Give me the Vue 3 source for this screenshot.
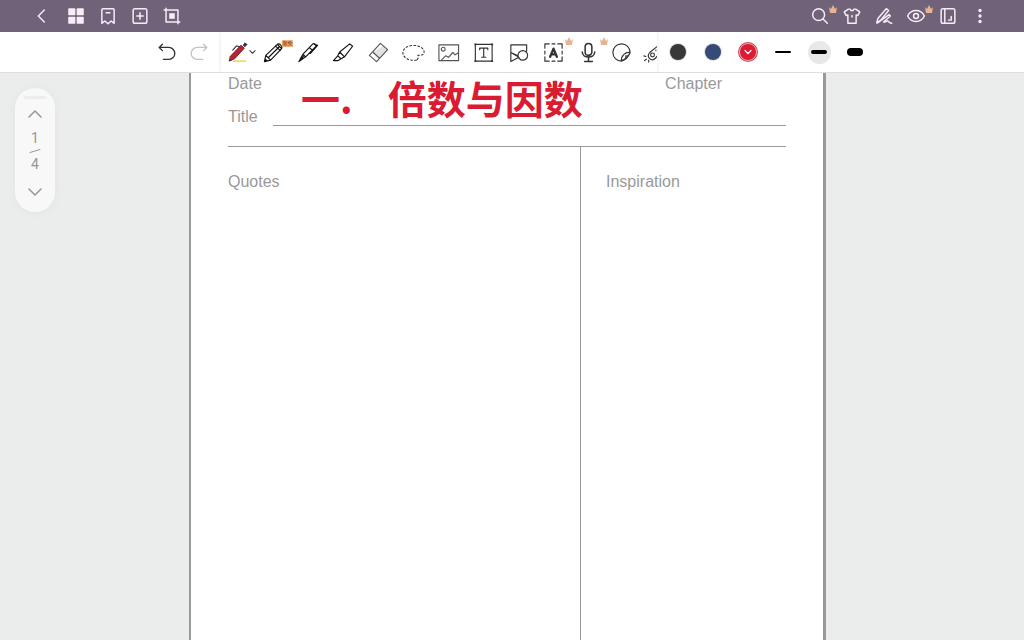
<script setup>
import { ref } from 'vue'

const page = ref(1)
const pages = 4
const color = ref('red')
const width = ref('medium')

const left = [
  { name: 'Back', d: 'M14.5 5.500l-6.500 6.500 6.500 6.500' },
  { name: 'Pages', d: '', grid: true },
  { name: 'Bookmark', d: 'M6.500 4h11a1.200 1.200 0 0 1 1.200 1.200V20l-3.200-2.500L12 20.500l-3.500-3L5.300 20V5.200A1.200 1.200 0 0 1 6.500 4zM10 8.500h4' },
  { name: 'Add page', d: 'M6.500 4h11a2 2 0 0 1 2 2v12a2 2 0 0 1-2 2h-11a2 2 0 0 1-2-2V6a2 2 0 0 1 2-2zM12 8.500v7M8.500 12h7' },
  { name: 'Crop', d: 'M3.500 5.500h15v15M5.500 3.500v15h15', square: true }
]
const right = [
  { name: 'Search', d: 'M17 10.500a6.500 6.500 0 1 1-13 0 6.500 6.500 0 0 1 13 0zM15.300 15.300l4.700 4.700', crown: true },
  { name: 'Theme', d: 'M8 4.500L3.500 7.500l2 4 2-.5v9h9v-9l2 .5 2-4L16 4.500h-2c-.5 2.500-3.500 2.500-4 0zM12 11.500v1.500' },
  { name: 'Handwriting', d: 'M4 19.500l1.500-5L14.500 4l2.500 2-8.500 10.500zM5 19.500L17.500 10.500l1.500 1.500-7.500 6.500c1 1.500 3-1.500 4.500-1s2 2.500 4.500 2.500' },
  { name: 'View mode', d: 'M2.800 12c4.200-8 14.200-8 18.400 0-4.200 8-14.200 8-18.400 0zM14.700 12a2.700 2.700 0 1 1-5.400 0 2.700 2.700 0 0 1 5.400 0z', crown: true },
  { name: 'Page layout', d: 'M6.500 4h11a2 2 0 0 1 2 2v12a2 2 0 0 1-2 2h-11a2 2 0 0 1-2-2V6a2 2 0 0 1 2-2zM8.500 4.500v15M15.500 12.500v4h-3' },
  { name: 'More', d: '', dots: true }
]
const colors = [
  { name: 'black', hex: '#383838' },
  { name: 'blue', hex: '#364a78' },
  { name: 'red', hex: '#dc1c34' }
]
const widths = ['thin', 'medium', 'thick']
</script>

<template>
  <div class="app">
    <header class="topbar">
      <div class="group start">
        <button v-for="i in left" :key="i.name" :aria-label="i.name">
          <svg viewBox="0 0 24 24">
            <path :d="i.d" />
            <g v-if="i.grid" class="solid">
              <rect x="3.500" y="3.500" width="7.800" height="7.800" rx="1" /><rect x="12.700" y="3.500" width="7.800" height="7.800" rx="1" />
              <rect x="3.500" y="12.700" width="7.800" height="7.800" rx="1" /><rect x="12.700" y="12.700" width="7.800" height="7.800" rx="1" />
            </g>
            <rect v-if="i.square" class="solid" x="9" y="9" width="6" height="6" />
          </svg>
        </button>
      </div>
      <div class="group">
        <button v-for="i in right" :key="i.name" :aria-label="i.name">
          <svg viewBox="0 0 24 24">
            <path :d="i.d" />
            <g v-if="i.dots" class="solid"><circle cx="12" cy="6" r="1.800" /><circle cx="12" cy="12" r="1.800" /><circle cx="12" cy="18" r="1.800" /></g>
          </svg>
          <svg v-if="i.crown" class="crown" viewBox="0 0 10 10"><path d="M1 3l2 2 2-4 2 4 2-2-1 6H2z" /></svg>
        </button>
      </div>
    </header>

    <div class="toolbar">
      <button class="history" aria-label="Undo"><svg viewBox="0 0 24 24"><path d="M7 3.500L3.500 7 7 10.500M3.500 7H14a6.500 6.500 0 0 1 0 13H8" /></svg></button>
      <button class="history faded" aria-label="Redo"><svg viewBox="0 0 24 24"><path d="M17 3.500L20.500 7 17 10.500M20.500 7H10a6.500 6.500 0 0 0 0 13h6" /></svg></button>
      <div class="tools">
        <button aria-label="Pen">
          <svg viewBox="0 0 24 24">
            <path class="yellow" d="M7 21h12" />
            <path class="redpen" d="M3.500 16L14.500 4.500l3.500 3L8 18.500l-5 2z" />
            <path class="nib" d="M1.500 21.500l1.500-3 2 2zM16.500 4.500l2-3 3 2-3 3z" />
            <path d="M6 9.500l4-4.500 3 1" />
          </svg>
          <svg class="chevron" viewBox="0 0 8 8"><path d="M1 2.500l3 3 3-3" /></svg>
        </button>
        <button aria-label="Pencil">
          <svg viewBox="0 0 24 24" class="bold">
            <path d="M2.500 21.500l1.500-6.500L16 3.500c2-1.500 6 2 4.500 4.500L9 20zM4 15l5 5M6.500 17.500L18 6M14 5l5 5M16 3.500l4.500 4.500" />
            <path class="nib" d="M2.500 21.500l1-3.500 2.500 2.500z" />
          </svg>
          <span class="tag">限免</span>
        </button>
        <button aria-label="Fountain pen"><svg viewBox="0 0 24 24" class="bold"><path d="M2 21.500l4-7.500L16.500 3c1.500-1 4 1 3 3L9 16.500zM6 14l3 2.500M2 21.500L7.500 15M13 7l3 2.500M18 3.500l3.500 1L14 13" /></svg></button>
        <button aria-label="Highlighter"><svg viewBox="0 0 24 24" class="bold"><path d="M8 11.500l10.500-8.500 3 2.500L13 16.500zM8 11.500l-2 4 3.500 3 3.500-2M6 15.500l-4.500 5h4.500l3.500-2M8 11.500l5 5" /></svg></button>
        <button aria-label="Eraser"><svg viewBox="0 0 24 24"><path class="shade" d="M6.500 11.500l6.500 6.500 8-9-4-4z" /><path class="gray" d="M2.500 15L14 2.500l7.500 6.500L10 21.500zM6 11.500l7 6.500" /></svg></button>
        <button aria-label="Lasso"><svg viewBox="0 0 26 24"><path class="dash" d="M16.500 20.500C7 22 1 17 1 12.500 1 7 7 4 13 4s12 3 12 7.500c0 3-3 4-7 3.500 0 2 1 4-1.500 5.500z" /></svg></button>
        <button aria-label="Image"><svg viewBox="0 0 24 24"><path class="gray" d="M2 4h20.500v16.500H2zM8.500 8.500a2 2 0 1 1-4 0 2 2 0 0 1 4 0zM5 19.500l4-4 3 1.500 4.500-5 2.500 2.500 3-2" /></svg></button>
        <button aria-label="Text"><svg viewBox="0 0 24 24"><path d="M3.500 3.500h17.500v17.500H3.500zM8 9V7.500h8.500V9M12.200 7.500V17M10 17h4.500" /><path class="nib" d="M2.500 2.500h2v2h-2zM20 2.500h2v2h-2zM2.500 20h2v2h-2zM20 20h2v2h-2z" /></svg></button>
        <button aria-label="Shapes"><svg viewBox="0 0 24 24"><path d="M4 12V4h16.500v6.500M21.500 15a5 5 0 1 1-10 0 5 5 0 0 1 10 0zM4 12v9.500l8.500-4.500zM4 12l7.500 3.500" /></svg></button>
        <button aria-label="Text recognition">
          <svg viewBox="0 0 24 24"><path d="M7.500 3H3v4.500M3 10.500v3M3 16.500V21h4.500M10.500 21h3M16.500 21H21v-4.500M21 13.500v-3M21 7.500V3h-4.500M13.500 3h-3" /><path class="heavy" d="M8.500 16.500L12 8l3.500 8.500M10 14h4" /></svg>
          <svg class="crown" viewBox="0 0 10 10"><path d="M1 3l2 2 2-4 2 4 2-2-1 6H2z" /></svg>
        </button>
        <button aria-label="Record">
          <svg viewBox="0 0 24 24"><path class="mic" d="M8.500 6a3.500 3.500 0 0 1 7 0v5.500a3.500 3.500 0 0 1-7 0zM5.500 11.500c0 7 13 7 13 0M12 17v4M8 21.300h8" /></svg>
          <svg class="crown" viewBox="0 0 10 10"><path d="M1 3l2 2 2-4 2 4 2-2-1 6H2z" /></svg>
        </button>
        <button class="narrow" aria-label="Sticker"><svg viewBox="0 0 24 24"><path d="M12 21a9 9 0 1 1 9-9c-2 5-5 8-9 9zM12 21c-1-5 4-10 9-9M13 20c3-1 4-3 3.500-4.500 2 .5 3.500-.5 4.500-3.500" /></svg></button>
        <button aria-label="Laser pointer"><svg viewBox="0 0 24 24"><path d="M8 12L18 4l4 5-8 9c-4 4-10-1-6-6zM13 14.500a2 2 0 1 1-4 0 2 2 0 0 1 4 0zM14.500 9.500v.5M2 15.500l2 .7M2.500 20.500l2-1.500M7 22v-2" /></svg></button>
      </div>
      <div class="choices">
        <button v-for="c in colors" :key="c.name" :aria-label="c.name" @click="color = c.name">
          <span class="swatch" :class="{ on: color === c.name }" :style="{ backgroundColor: c.hex }">
            <svg v-if="color === c.name" viewBox="0 0 8 8"><path d="M1 2.500l3 3 3-3" /></svg>
          </span>
        </button>
        <button v-for="w in widths" :key="w" class="weight" :aria-label="w" @click="width = w">
          <span class="disc" :class="{ on: width === w }"><span class="stroke" :class="w"></span></span>
        </button>
      </div>
    </div>

    <main class="canvas">
      <nav class="pager" aria-label="Pages">
        <span class="grip"></span>
        <button aria-label="Previous page" @click="page = Math.max(1, page - 1)"><svg viewBox="0 0 16 16"><path d="M2 11l6-6 6 6" /></svg></button>
        <span>{{ page }}</span>
        <svg class="slash" viewBox="0 0 12 4"><path d="M1 3.500l10-3" /></svg>
        <span>{{ pages }}</span>
        <button class="down" aria-label="Next page" @click="page = Math.min(pages, page + 1)"><svg viewBox="0 0 16 16"><path d="M2 5l6 6 6-6" /></svg></button>
      </nav>
      <article class="sheet">
        <div class="meta"><span>Date</span><span class="chapter">Chapter</span></div>
        <div class="titlerow"><span>Title</span><div class="line"></div></div>
        <h1 class="ink"><span>一.</span><span>倍数与因数</span></h1>
        <div class="columns">
          <section class="quotes">Quotes</section>
          <section class="inspiration">Inspiration</section>
        </div>
      </article>
    </main>
  </div>
</template>

<style>
body { margin: 0; }
</style>

<style scoped>
.app { height: 100vh; display: flex; flex-direction: column; overflow: hidden; font-family: "Liberation Sans", "Noto Sans CJK SC", sans-serif; background: #ebeded; }
button { position: relative; display: flex; align-items: center; justify-content: center; flex: none; padding: 0; border: 0; background: none; color: inherit; font: inherit; }
svg { display: block; fill: none; stroke: currentColor; stroke-linecap: round; stroke-linejoin: round; stroke-width: 1.5; }
.topbar { display: flex; justify-content: space-between; height: 32px; flex: none; padding: 0 28px 0 26px; background: #706379; color: #f7edf7; }
.group { display: flex; }
.group button { width: 32px; }
.group button > svg:first-child { width: 22px; height: 22px; stroke-width: 1.6; }
.start button:first-child { margin-right: 2px; }
.solid { fill: currentColor; stroke: none; }
.crown { position: absolute; width: 10px; height: 10px; top: 4px; right: -2px; fill: #e5b592; stroke: none; }
.toolbar { display: flex; justify-content: center; height: 40px; flex: none; overflow: hidden; background: #fff; border-bottom: 1px solid #dedede; color: #333; }
.history { width: 32px; }
.history svg { width: 22px; height: 22px; }
.faded { color: #c4c4c4; }
.tools { display: flex; width: 436px; margin-left: 6px; overflow: hidden; box-shadow: 0 0 4px #e4e4e4; }
.tools button { width: 35px; }
.tools .narrow { width: 30px; }
.tools button > svg:first-child { width: 23px; height: 23px; flex: none; stroke-width: 1.2; }
.tools .bold { color: #111; }
.tools .crown { top: 4px; right: -3px; }
.tools .chevron { position: absolute; right: 0; top: 16px; width: 7px; height: 8px; stroke-width: 1.2; }
.yellow { stroke: #f3db58; stroke-width: 2; }
.redpen { fill: #b92334; stroke: #761d2a; stroke-width: 1; }
.nib { fill: currentColor; stroke: none; }
.gray { stroke: #555; }
.shade { fill: #e2e2e2; stroke: none; }
.dash { stroke-dasharray: 2 2.5; }
.heavy { stroke-width: 2.4; }
.mic { stroke-width: 1.6; }
.tag { position: absolute; left: 26px; top: 8px; width: 11px; height: 7px; overflow: hidden; background: #f4b17b; color: #5d2c10; font-size: 5px; line-height: 7px; text-align: center; }
.choices { display: flex; margin-left: 3px; }
.choices button { width: 35px; }
.choices .weight { width: 36px; }
.swatch { display: flex; align-items: center; justify-content: center; width: 16px; height: 16px; border-radius: 50%; box-shadow: 0 0 0 1px #dedede; color: #fff; }
.swatch.on { box-shadow: 0 0 0 1px #efabb3, 0 0 0 2px #c44b58; }
.swatch svg { width: 8px; height: 8px; stroke-width: 1.2; }
.disc { display: flex; align-items: center; justify-content: center; width: 23px; height: 23px; border-radius: 50%; }
.disc.on { background: #e8e8e8; }
.stroke { width: 16px; border-radius: 4px; background: #000; }
.thin { height: 2px; }
.medium { height: 4px; }
.thick { height: 8px; }
.canvas { position: relative; flex: 1; display: flex; min-height: 0; }
.pager { position: absolute; left: 15px; top: 15px; display: flex; flex-direction: column; align-items: center; width: 40px; padding: 8px 0 2px; box-sizing: border-box; border-radius: 20px; background: #f8f8f8; box-shadow: 0 0 8px #e1e3e3; color: #969696; font: 14px/20px Roboto, sans-serif; }
.grip { width: 22px; height: 3px; border-radius: 2px; background: #ececec; }
.pager button { width: 32px; height: 29px; }
.pager .down { height: 36px; }
.pager button svg { width: 16px; height: 16px; }
.slash { width: 12px; height: 4px; margin: 1px 0; stroke-width: 1; }
.sheet { position: relative; flex: 1; display: flex; flex-direction: column; margin: 0 198px 0 189px; padding: 0 37px 0 36px; border: solid #999; border-width: 0 3px 0 2px; background: #fff; color: #999; font-size: 16px; line-height: 20px; }
.meta { display: flex; justify-content: space-between; padding: 1px 64px 0 1px; }
.titlerow { display: flex; align-items: flex-end; gap: 15px; padding: 14px 0 0 1px; }
.line { flex: 1; border-bottom: 1px solid #999; }
.titlerow span { line-height: 18px; }
.ink { position: absolute; left: 110px; top: 0; display: flex; gap: 35px; margin: 0; color: #d91c32; font: bold 39px/48px "Noto Sans CJK SC", sans-serif; white-space: nowrap; }
.columns { flex: 1; display: grid; grid-template-columns: 352fr 206fr; margin-top: 20px; margin-left: 1px; border-top: 1px solid #999; }
.quotes { padding-top: 25px; }
.inspiration { padding: 25px 0 0 25px; border-left: 1px solid #999; }
</style>
